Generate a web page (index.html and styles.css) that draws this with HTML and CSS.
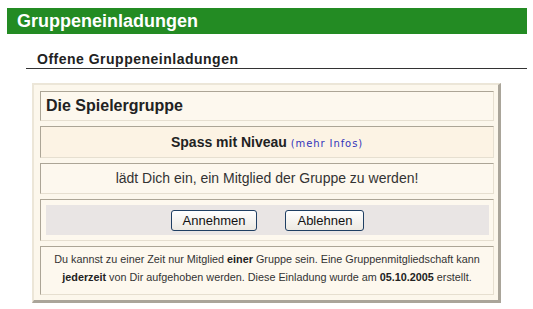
FILE: index.html
```html
<!DOCTYPE html>
<html lang="de">
<head>
    <meta charset="UTF-8">
    <title>Gruppeneinladungen</title>
    <link rel="stylesheet" href="styles.css">
</head>
<body>
    <h1 class="page-title">Gruppeneinladungen</h1>

    <h2 class="section-title">Offene Gruppeneinladungen</h2>

    <div class="invite">
        <div class="row row-head">Die Spielergruppe</div>
        <div class="row row-group">
            <b>Spass mit Niveau</b> <a href="#" class="more">(mehr Infos)</a>
        </div>
        <div class="row row-text">lädt Dich ein, ein Mitglied der Gruppe zu werden!</div>
        <div class="row row-actions">
            <div class="actions">
                <button class="btn">Annehmen</button>
                <button class="btn">Ablehnen</button>
            </div>
        </div>
        <div class="row row-note">
            Du kannst zu einer Zeit nur Mitglied <b>einer</b> Gruppe sein. Eine Gruppenmitgliedschaft kann<br>
            <b>jederzeit</b> von Dir aufgehoben werden. Diese Einladung wurde am <b>05.10.2005</b> erstellt.
        </div>
    </div>
</body>
</html>
```

FILE: styles.css
```css
* {
    box-sizing: border-box;
}

body {
    margin: 0;
    background: #fff;
    font-family: "Liberation Sans", Arial, sans-serif;
    color: #222;
}

.page-title {
    margin: 8px 6px 0 7px;
    height: 26px;
    padding-left: 10px;
    background-color: #238b23;
    color: #fff;
    font-size: 18px;
    line-height: 26px;
    font-weight: bold;
}

.section-title {
    margin: 18px 6px 0 26px;
    padding: 0 0 1px 11px;
    border-bottom: 1px solid #333;
    font-size: 14px;
    letter-spacing: 0.5px;
    line-height: 15px;
    font-weight: bold;
    color: #222;
}

.invite {
    margin: 14px 0 0 32px;
    width: 469px;
    padding: 6px 4px 5px 6px;
    background-color: #fcf7ec;
    border-style: solid;
    border-width: 2px 3px 3px 2px;
    border-color: #ece6d8 #aaa59a #aaa59a #ece6d8;
    display: flex;
    flex-direction: column;
    gap: 5px;
}

.row {
    border: 1px solid;
    border-color: #aca596 #e6dfd0 #e6dfd0 #aca596;
    background-color: #fdf8ee;
}

.row-head {
    height: 30px;
    padding-left: 5px;
    font-size: 16px;
    font-weight: bold;
    line-height: 28px;
}

.row-group {
    height: 32px;
    background-color: #fcf3e4;
    text-align: center;
    line-height: 30px;
    font-size: 14px;
}

.more {
    font-family: "DejaVu Sans", Verdana, sans-serif;
    font-size: 10px;
    letter-spacing: 0.9px;
    color: #3333bb;
    text-decoration: none;
}

.row-text {
    height: 31px;
    text-align: center;
    line-height: 29px;
    font-size: 14px;
    color: #333;
}

.row-actions {
    height: 42px;
    padding: 5px 4px 5px 5px;
}

.actions {
    height: 30px;
    background-color: #e9e5e4;
    display: flex;
    justify-content: center;
    align-items: center;
    gap: 28px;
}

.btn {
    height: 21px;
    padding: 0 11px;
    border: 1px solid #1f3f63;
    border-radius: 3px;
    background: linear-gradient(#ffffff, #ece9e2);
    font-family: "Liberation Sans", Arial, sans-serif;
    font-size: 13px;
    color: #111;
}

.row-note {
    height: 49px;
    padding-top: 3px;
    text-align: center;
    font-size: 10.8px;
    line-height: 18px;
    color: #333;
}

.row-note b {
    color: #222;
}
```
